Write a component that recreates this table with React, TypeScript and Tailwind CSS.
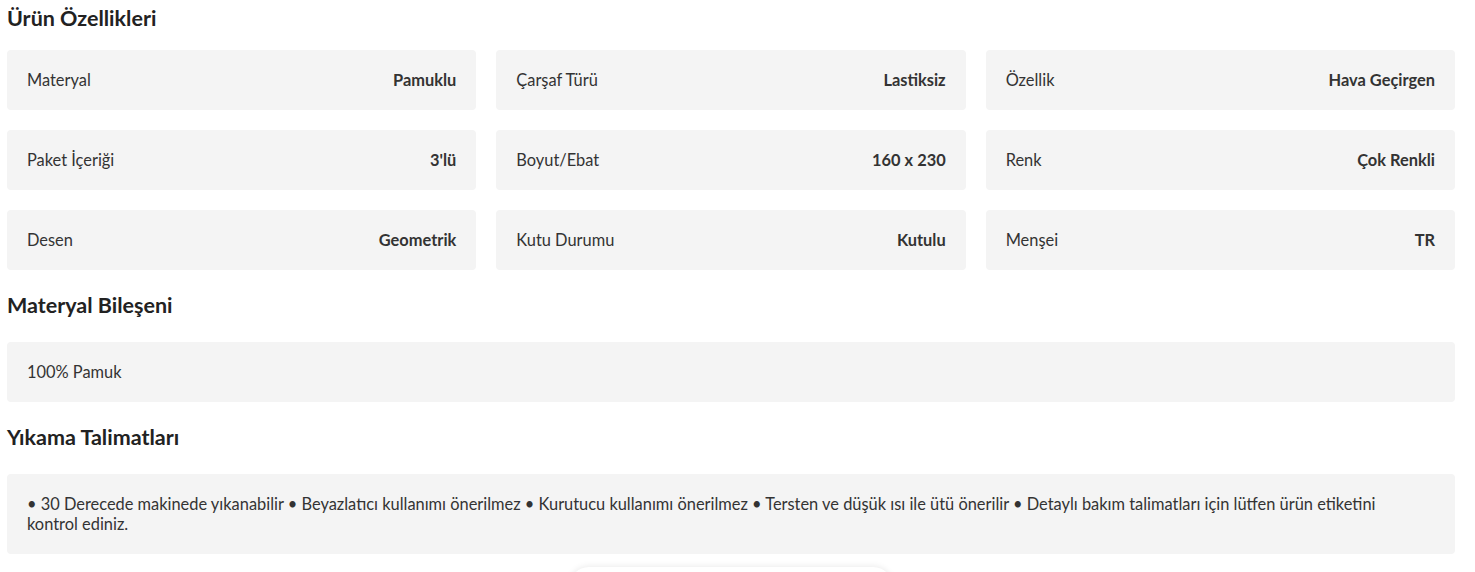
import React from 'react';

const specs = [
  { label: 'Materyal', value: 'Pamuklu' },
  { label: 'Çarşaf Türü', value: 'Lastiksiz' },
  { label: 'Özellik', value: 'Hava Geçirgen' },
  { label: 'Paket İçeriği', value: "3'lü" },
  { label: 'Boyut/Ebat', value: '160 x 230' },
  { label: 'Renk', value: 'Çok Renkli' },
  { label: 'Desen', value: 'Geometrik' },
  { label: 'Kutu Durumu', value: 'Kutulu' },
  { label: 'Menşei', value: 'TR' },
];

const font = { fontFamily: 'Lato, "Noto Sans", sans-serif' };

const App = () => {
  return (
    <div className="bg-white text-[#333] h-[572px] overflow-hidden" style={font}>
      <div className="ml-[7px] mr-[20px]">
        <h2 className="pt-1 text-[21.5px] leading-[28px] font-bold text-[#222]">Ürün Özellikleri</h2>

        <div className="mt-[18px] grid grid-cols-3 gap-5">
          {specs.map((spec, index) => (
            <div key={index} className="flex items-center justify-between rounded bg-[#f4f4f4] px-5 py-5 text-[16.4px] leading-5">
              <span className="text-[#333]">{spec.label}</span>
              <span className="font-bold text-[#333]">{spec.value}</span>
            </div>
          ))}
        </div>

        <h2 className="mt-[21px] text-[21.5px] leading-[28px] font-bold text-[#222]">Materyal Bileşeni</h2>
        <div className="mt-[23px] rounded bg-[#f4f4f4] p-5 text-[16.4px] leading-5">100% Pamuk</div>

        <h2 className="mt-[21px] text-[21.5px] leading-[28px] font-bold text-[#222]">Yıkama Talimatları</h2>
        <div className="mt-[23px] rounded bg-[#f4f4f4] p-5 pr-[40px] text-[16.4px] leading-5">
          • 30 Derecede makinede yıkanabilir • Beyazlatıcı kullanımı önerilmez • Kurutucu kullanımı önerilmez • Tersten ve düşük ısı ile ütü önerilir • Detaylı bakım talimatları için lütfen ürün etiketini kontrol ediniz.
        </div>

        <div className="mx-auto mt-[13px] h-10 w-[324px] rounded-full bg-white shadow-[0_-1px_6px_rgba(0,0,0,0.08)]"></div>
      </div>
    </div>
  );
};

export default App;
